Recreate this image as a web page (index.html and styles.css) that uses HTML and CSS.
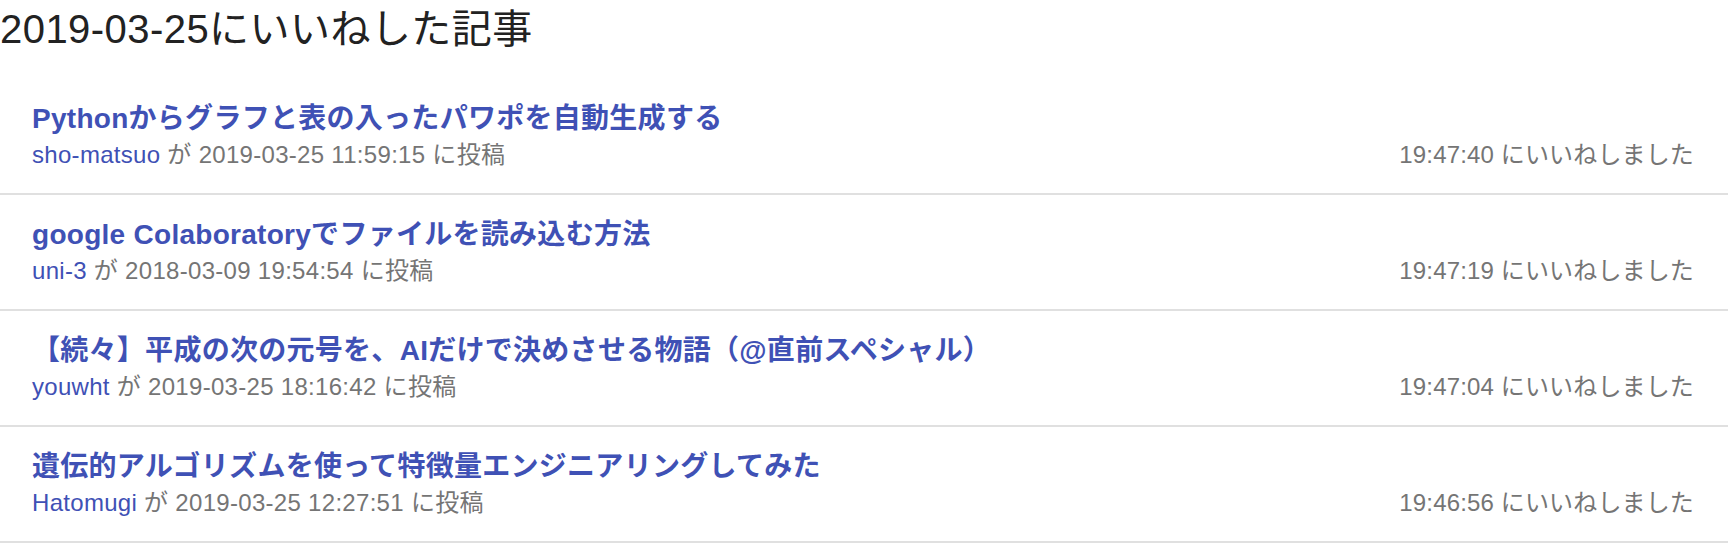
FILE: index.html
```html
<!DOCTYPE html>
<html lang="ja">
<head>
<meta charset="utf-8">
<title>2019-03-25にいいねした記事</title>
<link rel="stylesheet" href="styles.css">
</head>
<body>
  <h1 class="page-title">2019-03-25にいいねした記事</h1>
  <ul class="like-list">
    <li class="like-item">
      <div class="like-main">
        <a class="like-title" href="#">Pythonからグラフと表の入ったパワポを自動生成する</a>
        <div class="like-meta"><a class="like-user" href="#">sho-matsuo</a> が 2019-03-25 11:59:15 に投稿</div>
      </div>
      <div class="like-time">19:47:40 にいいねしました</div>
    </li>
    <li class="like-item">
      <div class="like-main">
        <a class="like-title" href="#">google Colaboratoryでファイルを読み込む方法</a>
        <div class="like-meta"><a class="like-user" href="#">uni-3</a> が 2018-03-09 19:54:54 に投稿</div>
      </div>
      <div class="like-time">19:47:19 にいいねしました</div>
    </li>
    <li class="like-item">
      <div class="like-main">
        <a class="like-title" href="#">【続々】平成の次の元号を、AIだけで決めさせる物語（@直前スペシャル）</a>
        <div class="like-meta"><a class="like-user" href="#">youwht</a> が 2019-03-25 18:16:42 に投稿</div>
      </div>
      <div class="like-time">19:47:04 にいいねしました</div>
    </li>
    <li class="like-item">
      <div class="like-main">
        <a class="like-title" href="#">遺伝的アルゴリズムを使って特徴量エンジニアリングしてみた</a>
        <div class="like-meta"><a class="like-user" href="#">Hatomugi</a> が 2019-03-25 12:27:51 に投稿</div>
      </div>
      <div class="like-time">19:46:56 にいいねしました</div>
    </li>
  </ul>
</body>
</html>
```

FILE: styles.css
```css
html, body {
  margin: 0;
  padding: 0;
  background: #ffffff;
}

body {
  font-family: "Liberation Sans", "Noto Sans CJK JP", sans-serif;
  color: #222222;
}

.page-title {
  margin: 5px 0 26px 0;
  font-size: 40px;
  line-height: 48px;
  font-weight: normal;
  letter-spacing: 0.45px;
  color: #222222;
}

.like-list {
  list-style: none;
  margin: 0;
  padding: 0;
}

.like-item {
  display: flex;
  align-items: flex-end;
  justify-content: space-between;
  padding: 22px 34px 20px 32px;
  border-bottom: 2px solid #e0e0e0;
}

.like-main {
  display: flex;
  flex-direction: column;
}

.like-title {
  font-size: 28px;
  line-height: 36px;
  font-weight: bold;
  letter-spacing: 0.28px;
  color: #3f51b5;
  text-decoration: none;
}

.like-meta,
.like-time {
  font-size: 24px;
  line-height: 36px;
  color: #757575;
}

.like-meta {
  letter-spacing: 0.3px;
}

.like-time {
  letter-spacing: 0.15px;
}

.like-user {
  color: #3f51b5;
  text-decoration: none;
}
```
